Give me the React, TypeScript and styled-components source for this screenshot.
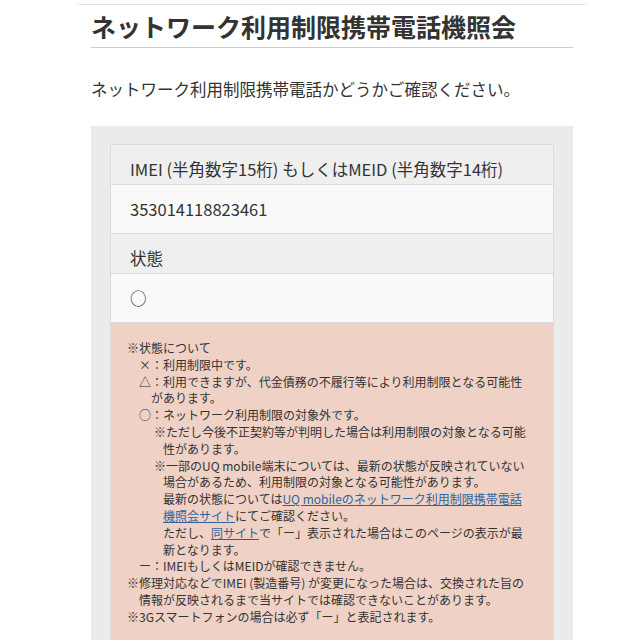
import React from "react";
import styled, { createGlobalStyle } from "styled-components";

const GlobalStyle = createGlobalStyle`
  html, body {
    margin: 0;
    padding: 0;
    background: #ffffff;
  }
  body {
    font-family: "Noto Sans CJK JP", "Noto Sans", sans-serif;
    color: #333333;
  }
`;

const Page = styled.div`
  width: 506px;
  margin: 4px 0 0 79px;
  padding: 0 12px;
  box-sizing: border-box;
  border-top: 1px solid #e0e0e0;
`;

const Title = styled.h1`
  margin: 0;
  padding: 5px 0 4px;
  font-size: 25px;
  line-height: 33px;
  font-weight: 700;
  color: #333333;
  border-bottom: 1px solid #cccccc;
`;

const Lead = styled.p`
  margin: 29px 0 25px;
  font-size: 16.5px;
  line-height: 24px;
  color: #333333;
`;

const Panel = styled.div`
  background: #ebebeb;
  padding: 18px 19px 0;
  min-height: 520px;
`;

const Table = styled.div`
  border: 1px solid #dcdcdc;
  border-bottom: none;
`;

const Label = styled.div`
  background: #efefef;
  padding: 12px 19px 3px;
  font-size: 16.5px;
  line-height: 24px;
  border-bottom: 1px solid #dcdcdc;
`;

const Value = styled.div`
  background: #f9f9f9;
  padding: 12px 19px 12px;
  font-size: 16.5px;
  line-height: 24px;
  border-bottom: 1px solid #dcdcdc;
`;

const Notes = styled.div`
  background: #efd2c5;
  padding: 17px 24px 24px 16px;
  font-size: 12px;
  line-height: 16.8px;
  color: #333333;
`;

const Item = styled.div<{ $indent: number; $hang: number; $right?: number }>`
  margin-left: ${(p) => p.$indent}px;
  margin-right: ${(p) => p.$right ?? 0}px;
  padding-left: ${(p) => p.$hang}px;
  text-indent: -${(p) => p.$hang}px;
`;

const Link = styled.a`
  color: #2d64a0;
  text-decoration: underline;
`;

export default function App() {
  return (
    <>
      <GlobalStyle />
      <Page>
        <Title>ネットワーク利用制限携帯電話機照会</Title>
        <Lead>ネットワーク利用制限携帯電話かどうかご確認ください。</Lead>
        <Panel>
          <Table>
            <Label>IMEI (半角数字15桁) もしくはMEID (半角数字14桁)</Label>
            <Value>353014118823461</Value>
            <Label>状態</Label>
            <Value>○</Value>
            <Notes>
              <Item $indent={0} $hang={12}>※状態について</Item>
              <Item $indent={12} $hang={12}>×：利用制限中です。</Item>
              <Item $indent={12} $hang={12}>
                △：利用できますが、代金債務の不履行等により利用制限となる可能性があります。
              </Item>
              <Item $indent={12} $hang={12}>○：ネットワーク利用制限の対象外です。</Item>
              <Item $indent={27} $hang={9}>
                ※ただし今後不正契約等が判明した場合は利用制限の対象となる可能性があります。
              </Item>
              <Item $indent={27} $hang={9}>
                ※一部のUQ mobile端末については、最新の状態が反映されていない場合があるため、利用制限の対象となる可能性があります。
              </Item>
              <Item $indent={36} $hang={0} $right={7}>
                最新の状態については
                <Link href="#">UQ mobileのネットワーク利用制限携帯電話機照会サイト</Link>
                にてご確認ください。
              </Item>
              <Item $indent={36} $hang={0}>
                ただし、<Link href="#">同サイト</Link>で「ー」表示された場合はこのページの表示が最新となります。
              </Item>
              <Item $indent={12} $hang={12}>ー：IMEIもしくはMEIDが確認できません。</Item>
              <Item $indent={0} $hang={12}>
                ※修理対応などでIMEI (製造番号) が変更になった場合は、交換された旨の情報が反映されるまで当サイトでは確認できないことがあります。
              </Item>
              <Item $indent={0} $hang={12}>※3Gスマートフォンの場合は必ず「ー」と表記されます。</Item>
            </Notes>
          </Table>
        </Panel>
      </Page>
    </>
  );
}
